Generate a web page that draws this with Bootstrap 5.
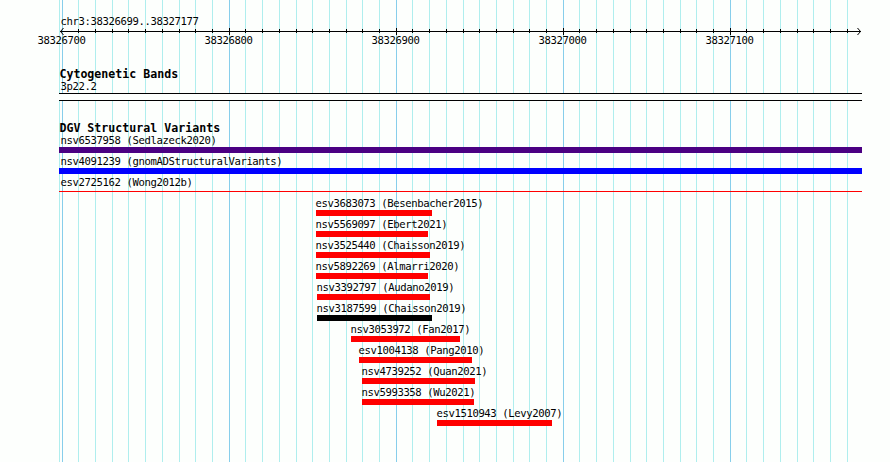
<!DOCTYPE html>
<html lang="en">
<head>
    <meta charset="UTF-8">
    <meta name="viewport" content="width=device-width, initial-scale=1.0">
    <title>chr3:38326699..38327177</title>
    <link href="https://cdn.jsdelivr.net/npm/bootstrap@5.3.0/dist/css/bootstrap.min.css" rel="stylesheet">
    <style>
        body {
            background: #fdfffd;
            color: #000;
            font-family: "DejaVu Sans Mono", "Liberation Mono", monospace;
        }

        .browser {
            width: 890px;
            height: 462px;
        }

        .tracks {
            width: 803px;
            margin-left: 59px;
        }

        .region-name,
        .feature-name {
            font-size: 10.6px;
            letter-spacing: -0.382px;
            line-height: 12px;
            height: 12px;
            white-space: pre;
        }

        .feature-name {
            margin-left: -0.6px;
        }

        .region-name {
            margin: 15px 0 0 1.5px;
        }

        .ruler {
            height: 20px;
            margin-left: -59px;
            font-size: 10.6px;
            letter-spacing: -0.382px;
        }

        .cyto-track {
            margin-top: 21px;
        }

        .variant-track {
            margin-top: 21px;
        }

        .track-title {
            font-size: 11.6px;
            font-weight: bold;
            letter-spacing: 0.016px;
            line-height: 13px;
            height: 12px;
            padding-left: 0.4px;
        }

        .cyto-band {
            height: 8px;
            margin-top: 1px;
            background: #fdfffd;
            border: solid #000;
            border-width: 1px 0;
        }

        .feature {
            height: 21px;
        }

        .feature-bar {
            height: 6px;
            margin-top: 1px;
        }

        .thin .feature-bar {
            height: 1px;
            margin-top: 3px;
        }

        .wide .feature-name {
            margin-left: 1.5px;
        }
    </style>
</head>
<body>

    <div class="browser position-relative overflow-hidden">
        <!-- Grid behind the tracks -->
        <svg id="grid" class="position-absolute top-0 start-0" width="890" height="462" shape-rendering="crispEdges"></svg>

        <div class="tracks position-relative d-flex flex-column">
            <div class="region-name">chr3:38326699..38327177</div>
            <svg id="ruler" class="ruler d-block" width="890" height="20"></svg>

            <!-- Cytogenetic Bands -->
            <div class="cyto-track wide">
                <div class="track-title">Cytogenetic Bands</div>
                <div class="feature-name">3p22.2</div>
                <div class="cyto-band"></div>
            </div>

            <!-- Structural Variants -->
            <div class="variant-track">
                <div class="track-title">DGV Structural Variants</div>
                <div id="variants"></div>
            </div>
        </div>
    </div>

    <script>
        const variants = [
            { name: 'nsv6537958 (Sedlazeck2020)', start: 59, end: 862, color: '#4b0082', type: 'wide' },
            { name: 'nsv4091239 (gnomADStructuralVariants)', start: 59, end: 862, color: '#0000ff', type: 'wide' },
            { name: 'esv2725162 (Wong2012b)', start: 59, end: 862, color: '#ff0000', type: 'wide thin' },
            { name: 'esv3683073 (Besenbacher2015)', start: 316, end: 432, color: '#ff0000' },
            { name: 'nsv5569097 (Ebert2021)', start: 316, end: 428, color: '#ff0000' },
            { name: 'nsv3525440 (Chaisson2019)', start: 316, end: 430, color: '#ff0000' },
            { name: 'nsv5892269 (Almarri2020)', start: 316, end: 428, color: '#ff0000' },
            { name: 'nsv3392797 (Audano2019)', start: 317, end: 430, color: '#ff0000' },
            { name: 'nsv3187599 (Chaisson2019)', start: 317, end: 432, color: '#000000' },
            { name: 'nsv3053972 (Fan2017)', start: 351, end: 460, color: '#ff0000' },
            { name: 'esv1004138 (Pang2010)', start: 359, end: 472, color: '#ff0000' },
            { name: 'nsv4739252 (Quan2021)', start: 362, end: 475, color: '#ff0000' },
            { name: 'nsv5993358 (Wu2021)', start: 362, end: 474, color: '#ff0000' },
            { name: 'esv1510943 (Levy2007)', start: 437, end: 552, color: '#ff0000' }
        ];

        // One line every 10 bp
        const gridX = i => Math.floor(62.175 + 16.7025 * i);

        function drawGrid() {
            let lines = '<rect x="59" y="0" width="1" height="462" fill="#afeeee"/>';
            for (let i = 0; i < 48; i++) {
                const color = i % 10 === 0 ? '#87ceeb' : '#afeeee';
                lines += `<rect x="${gridX(i)}" y="0" width="1" height="462" fill="${color}"/>`;
            }
            document.getElementById('grid').innerHTML = lines;
        }

        function drawRuler() {
            let marks = '<path d="M60 4.5H861M63.5 1L60.5 4.5L63.5 8M857.5 1L860.5 4.5L857.5 8" fill="none" stroke="#000"/>';
            for (let i = 1; i < 48; i++) {
                const major = i % 10 === 0;
                marks += `<rect x="${gridX(i)}" y="${major ? 1 : 2}" width="1" height="${major ? 7 : 4}"/>`;
            }
            for (let i = 0; i < 5; i++) {
                marks += `<text x="${gridX(i * 10) - 24.5}" y="17">${38326700 + i * 100}</text>`;
            }
            document.getElementById('ruler').innerHTML = marks;
        }

        function drawVariants() {
            document.getElementById('variants').innerHTML = variants.map(v => `
                <div class="feature ${v.type || ''}" style="margin-left: ${v.start - 59}px">
                    <div class="feature-name">${v.name}</div>
                    <div class="feature-bar" style="width: ${v.end - v.start}px; background: ${v.color}"></div>
                </div>
            `).join('');
        }

        drawGrid();
        drawRuler();
        drawVariants();
    </script>
    <script src="https://cdn.jsdelivr.net/npm/bootstrap@5.3.0/dist/js/bootstrap.bundle.min.js"></script>
</body>
</html>
